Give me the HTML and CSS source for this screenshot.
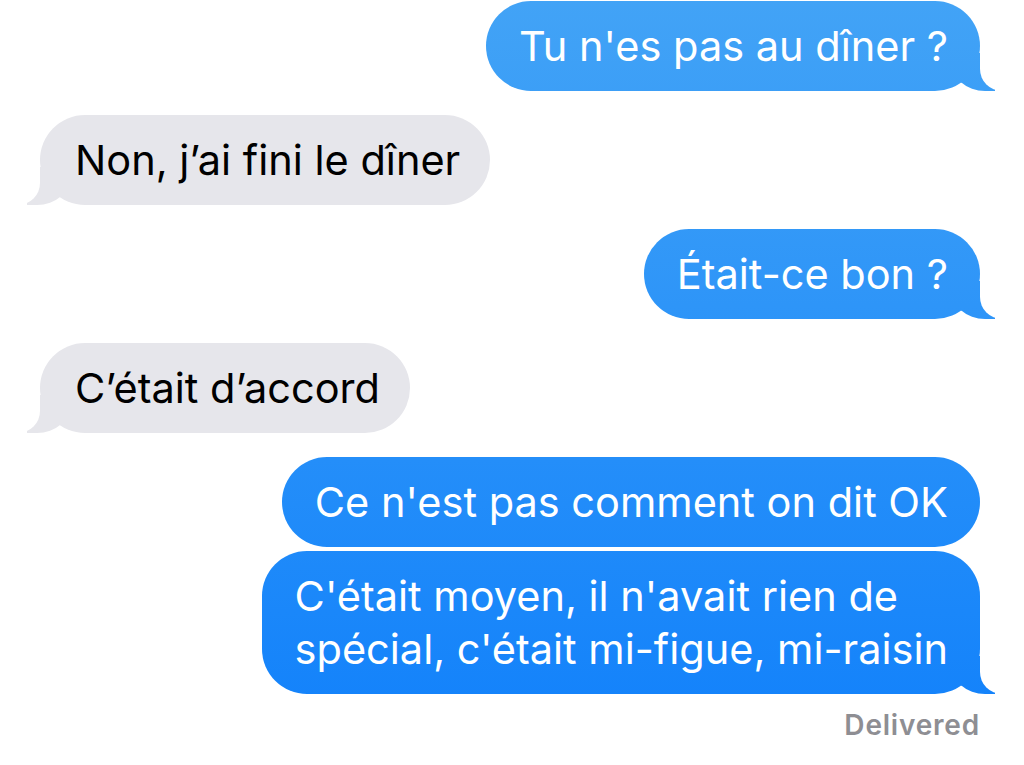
FILE: index.html
```html
<!DOCTYPE html>
<html>
<head>
  <title>Messages</title>
  <meta charset="utf-8">
  <link rel="stylesheet" href="styles.css">
</head>
<body>
  <div class="thread">
    <div class="msg sent tail">Tu n'es pas au dîner ?</div>
    <div class="msg received tail">Non, j’ai fini le dîner</div>
    <div class="msg sent tail">Était-ce bon ?</div>
    <div class="msg received tail">C’était d’accord</div>
    <div class="group">
      <div class="msg sent">Ce n'est pas comment on dit OK</div>
      <div class="msg sent tail">C'était moyen, il n'avait rien de<br>spécial, c'était mi-figue, mi-raisin</div>
    </div>
    <div class="status">Delivered</div>
  </div>
</body>
</html>
```

FILE: styles.css
```css
:root {
  --sent-top: #42a3f6;
  --sent-bottom: #1080fb;
  --received-bg: #e6e6eb;
  --status-color: #8e8e93;
}

body {
  margin: 0;
  background: #ffffff;
  font-family: Inter, "Liberation Sans", sans-serif;
  overflow: hidden;
}

.thread {
  display: flex;
  flex-direction: column;
  gap: 24px;
  padding: 1px 44px 0 40px;
}

.group {
  display: flex;
  flex-direction: column;
  align-items: flex-end;
  gap: 4px;
}

.msg {
  position: relative;
  font-size: 41.5px;
  line-height: 53px;
  padding: 19px 32px 18px 33px;
  border-radius: 45px;
  max-width: 720px;
}

.sent {
  align-self: flex-end;
  color: #ffffff;
  background: linear-gradient(var(--sent-top), var(--sent-bottom)) fixed;
}

.received {
  align-self: flex-start;
  color: #000000;
  background: var(--received-bg);
  padding-left: 35px;
  padding-right: 30px;
}

/* Bubble tails */
.tail::before,
.tail::after {
  content: "";
  position: absolute;
  bottom: 0;
  height: 38px;
}

.sent.tail::before {
  right: -15px;
  width: 44px;
  background: linear-gradient(var(--sent-top), var(--sent-bottom)) fixed;
  border-bottom-left-radius: 34px 30px;
}

.sent.tail::after {
  right: -56px;
  width: 56px;
  background: #ffffff;
  border-bottom-left-radius: 22px;
}

.received.tail::before {
  left: -13px;
  width: 44px;
  background: var(--received-bg);
  border-bottom-right-radius: 34px 30px;
}

.received.tail::after {
  left: -54px;
  width: 54px;
  background: #ffffff;
  border-bottom-right-radius: 22px;
}

.status {
  align-self: flex-end;
  margin-top: -9px;
  font-size: 28px;
  line-height: 32px;
  letter-spacing: 0.8px;
  font-weight: 600;
  color: var(--status-color);
}
```
